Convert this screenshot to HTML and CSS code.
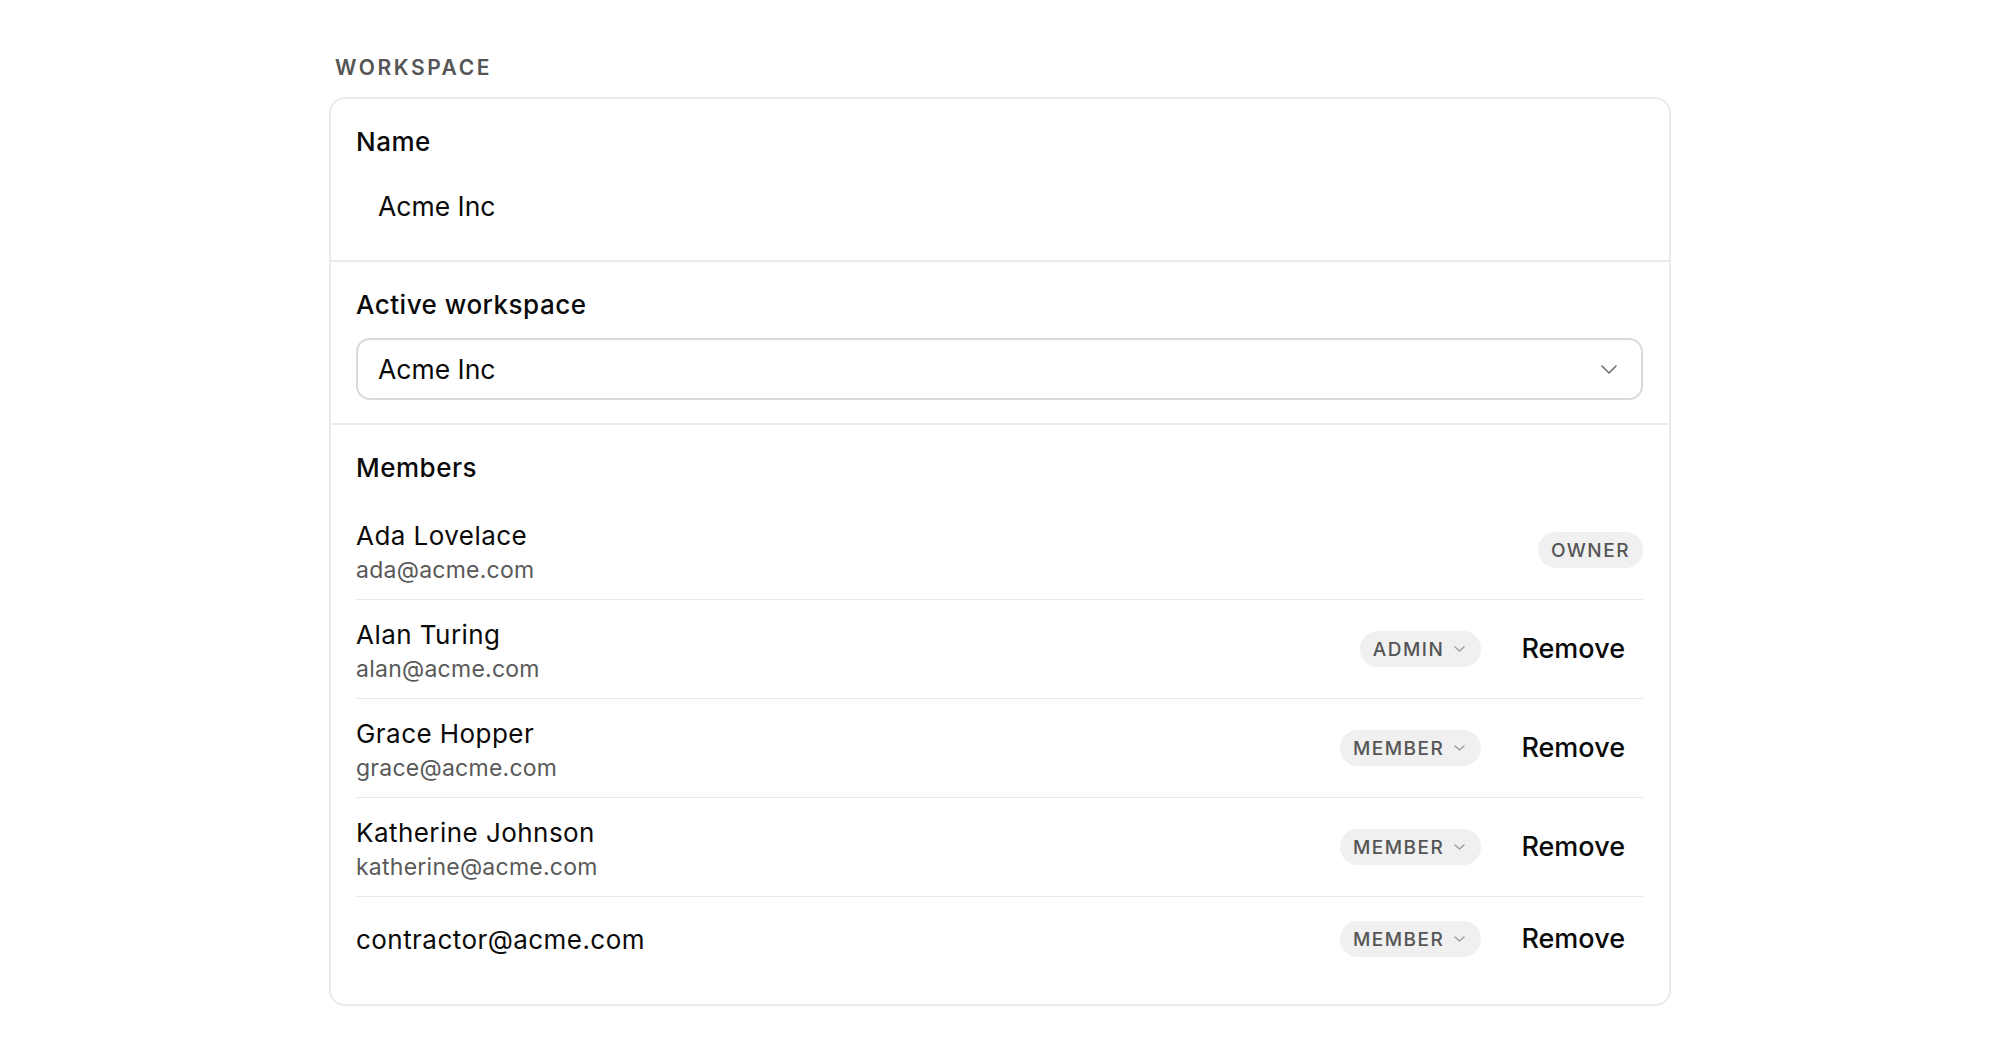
FILE: index.html
```
<!DOCTYPE html>
<html lang="en">
<head>
  <meta charset="UTF-8">
  <title>Workspace settings</title>
  <link rel="stylesheet" href="styles.css">
</head>
<body>
  <div class="page">
    <h2 class="group-title">Workspace</h2>

    <div class="card">
      <div class="section">
        <label for="ws_name">Name</label>
        <input type="text" id="ws_name" class="plain-input" value="Acme Inc">
      </div>

      <div class="section">
        <label>Active workspace</label>
        <div class="select">
          <span>Acme Inc</span>
          <svg class="chevron" width="16" height="9" viewBox="0 0 16 9"><path d="M1 1l7 7 7-7" fill="none" stroke="#707070" stroke-width="1.6" stroke-linecap="round" stroke-linejoin="round"/></svg>
        </div>
      </div>

      <div class="section">
        <label>Members</label>
        <div class="members">
          <div class="member">
            <div class="who">
              <div class="who-name">Ada Lovelace</div>
              <div class="who-mail">ada@acme.com</div>
            </div>
            <span class="role">Owner</span>
          </div>

          <div class="member">
            <div class="who">
              <div class="who-name">Alan Turing</div>
              <div class="who-mail">alan@acme.com</div>
            </div>
            <span class="role role-pick">Admin
              <svg width="11" height="6" viewBox="0 0 11 6"><path d="M1 1l4.5 4 4.5-4" fill="none" stroke="#9a9a9a" stroke-width="1.3" stroke-linecap="round" stroke-linejoin="round"/></svg>
            </span>
            <button type="button" class="remove">Remove</button>
          </div>

          <div class="member">
            <div class="who">
              <div class="who-name">Grace Hopper</div>
              <div class="who-mail">grace@acme.com</div>
            </div>
            <span class="role role-pick">Member
              <svg width="11" height="6" viewBox="0 0 11 6"><path d="M1 1l4.5 4 4.5-4" fill="none" stroke="#9a9a9a" stroke-width="1.3" stroke-linecap="round" stroke-linejoin="round"/></svg>
            </span>
            <button type="button" class="remove">Remove</button>
          </div>

          <div class="member">
            <div class="who">
              <div class="who-name">Katherine Johnson</div>
              <div class="who-mail">katherine@acme.com</div>
            </div>
            <span class="role role-pick">Member
              <svg width="11" height="6" viewBox="0 0 11 6"><path d="M1 1l4.5 4 4.5-4" fill="none" stroke="#9a9a9a" stroke-width="1.3" stroke-linecap="round" stroke-linejoin="round"/></svg>
            </span>
            <button type="button" class="remove">Remove</button>
          </div>

          <div class="member">
            <div class="who">
              <div class="who-name">contractor@acme.com</div>
            </div>
            <span class="role role-pick">Member
              <svg width="11" height="6" viewBox="0 0 11 6"><path d="M1 1l4.5 4 4.5-4" fill="none" stroke="#9a9a9a" stroke-width="1.3" stroke-linecap="round" stroke-linejoin="round"/></svg>
            </span>
            <button type="button" class="remove">Remove</button>
          </div>
        </div>
      </div>
    </div>
  </div>
</body>
</html>
```

FILE: styles.css
```
body {
  margin: 0;
  font-family: Inter, "Liberation Sans", sans-serif;
  color: #0a0a0a;
  background-color: #ffffff;
}

.page {
  max-width: 1342px;
  margin: 0 auto;
  padding-top: 55px;
}

.group-title {
  margin: 0 0 16px;
  padding-left: 6px;
  font-size: 21px;
  line-height: 26px;
  font-weight: 600;
  letter-spacing: 2.6px;
  text-transform: uppercase;
  color: #555;
}

.card {
  border: 2px solid #ebebeb;
  border-radius: 16px;
}

.section {
  display: flex;
  flex-direction: column;
  gap: 18px;
  padding: 28px 26px 23px 25px;
}

.section + .section {
  border-top: 2px solid #ebebeb;
}

label {
  font-size: 26px;
  line-height: 30px;
  font-weight: 500;
  letter-spacing: 0.5px;
}

.plain-input,
.select {
  box-sizing: border-box;
  height: 62px;
  padding: 0 19px 0 20px;
  border: 2px solid transparent;
  border-radius: 14px;
  font-family: inherit;
  font-size: 26.5px;
  color: #0a0a0a;
  background: #fff;
}

.plain-input {
  outline: none;
}

.select {
  display: flex;
  align-items: center;
  justify-content: space-between;
  border-color: #dadada;
  padding-right: 24px;
}

.members {
  display: flex;
  flex-direction: column;
}

.member {
  display: flex;
  align-items: center;
  padding: 16px 0;
}

.member + .member {
  border-top: 1px solid #e8e8e8;
}

.who {
  flex: 1;
}

.who-name {
  font-size: 26px;
  line-height: 37px;
  letter-spacing: 0.45px;
}

.who-mail {
  margin-top: 3px;
  font-size: 23px;
  line-height: 26px;
  letter-spacing: 0.25px;
  color: #595959;
}

.role {
  display: inline-flex;
  align-items: center;
  height: 36px;
  padding: 0 13px;
  border-radius: 18px;
  background-color: #f0f0f0;
  color: #555;
  font-size: 19px;
  font-weight: 500;
  letter-spacing: 1.5px;
  text-transform: uppercase;
}

.role-pick {
  padding-right: 16px;
}

.role-pick svg {
  margin-left: 10px;
}

.remove {
  margin-left: 22px;
  padding: 10px 18px;
  border: none;
  background: none;
  font-family: inherit;
  font-size: 27px;
  line-height: 32px;
  font-weight: 500;
  color: #0a0a0a;
  cursor: pointer;
}
```
